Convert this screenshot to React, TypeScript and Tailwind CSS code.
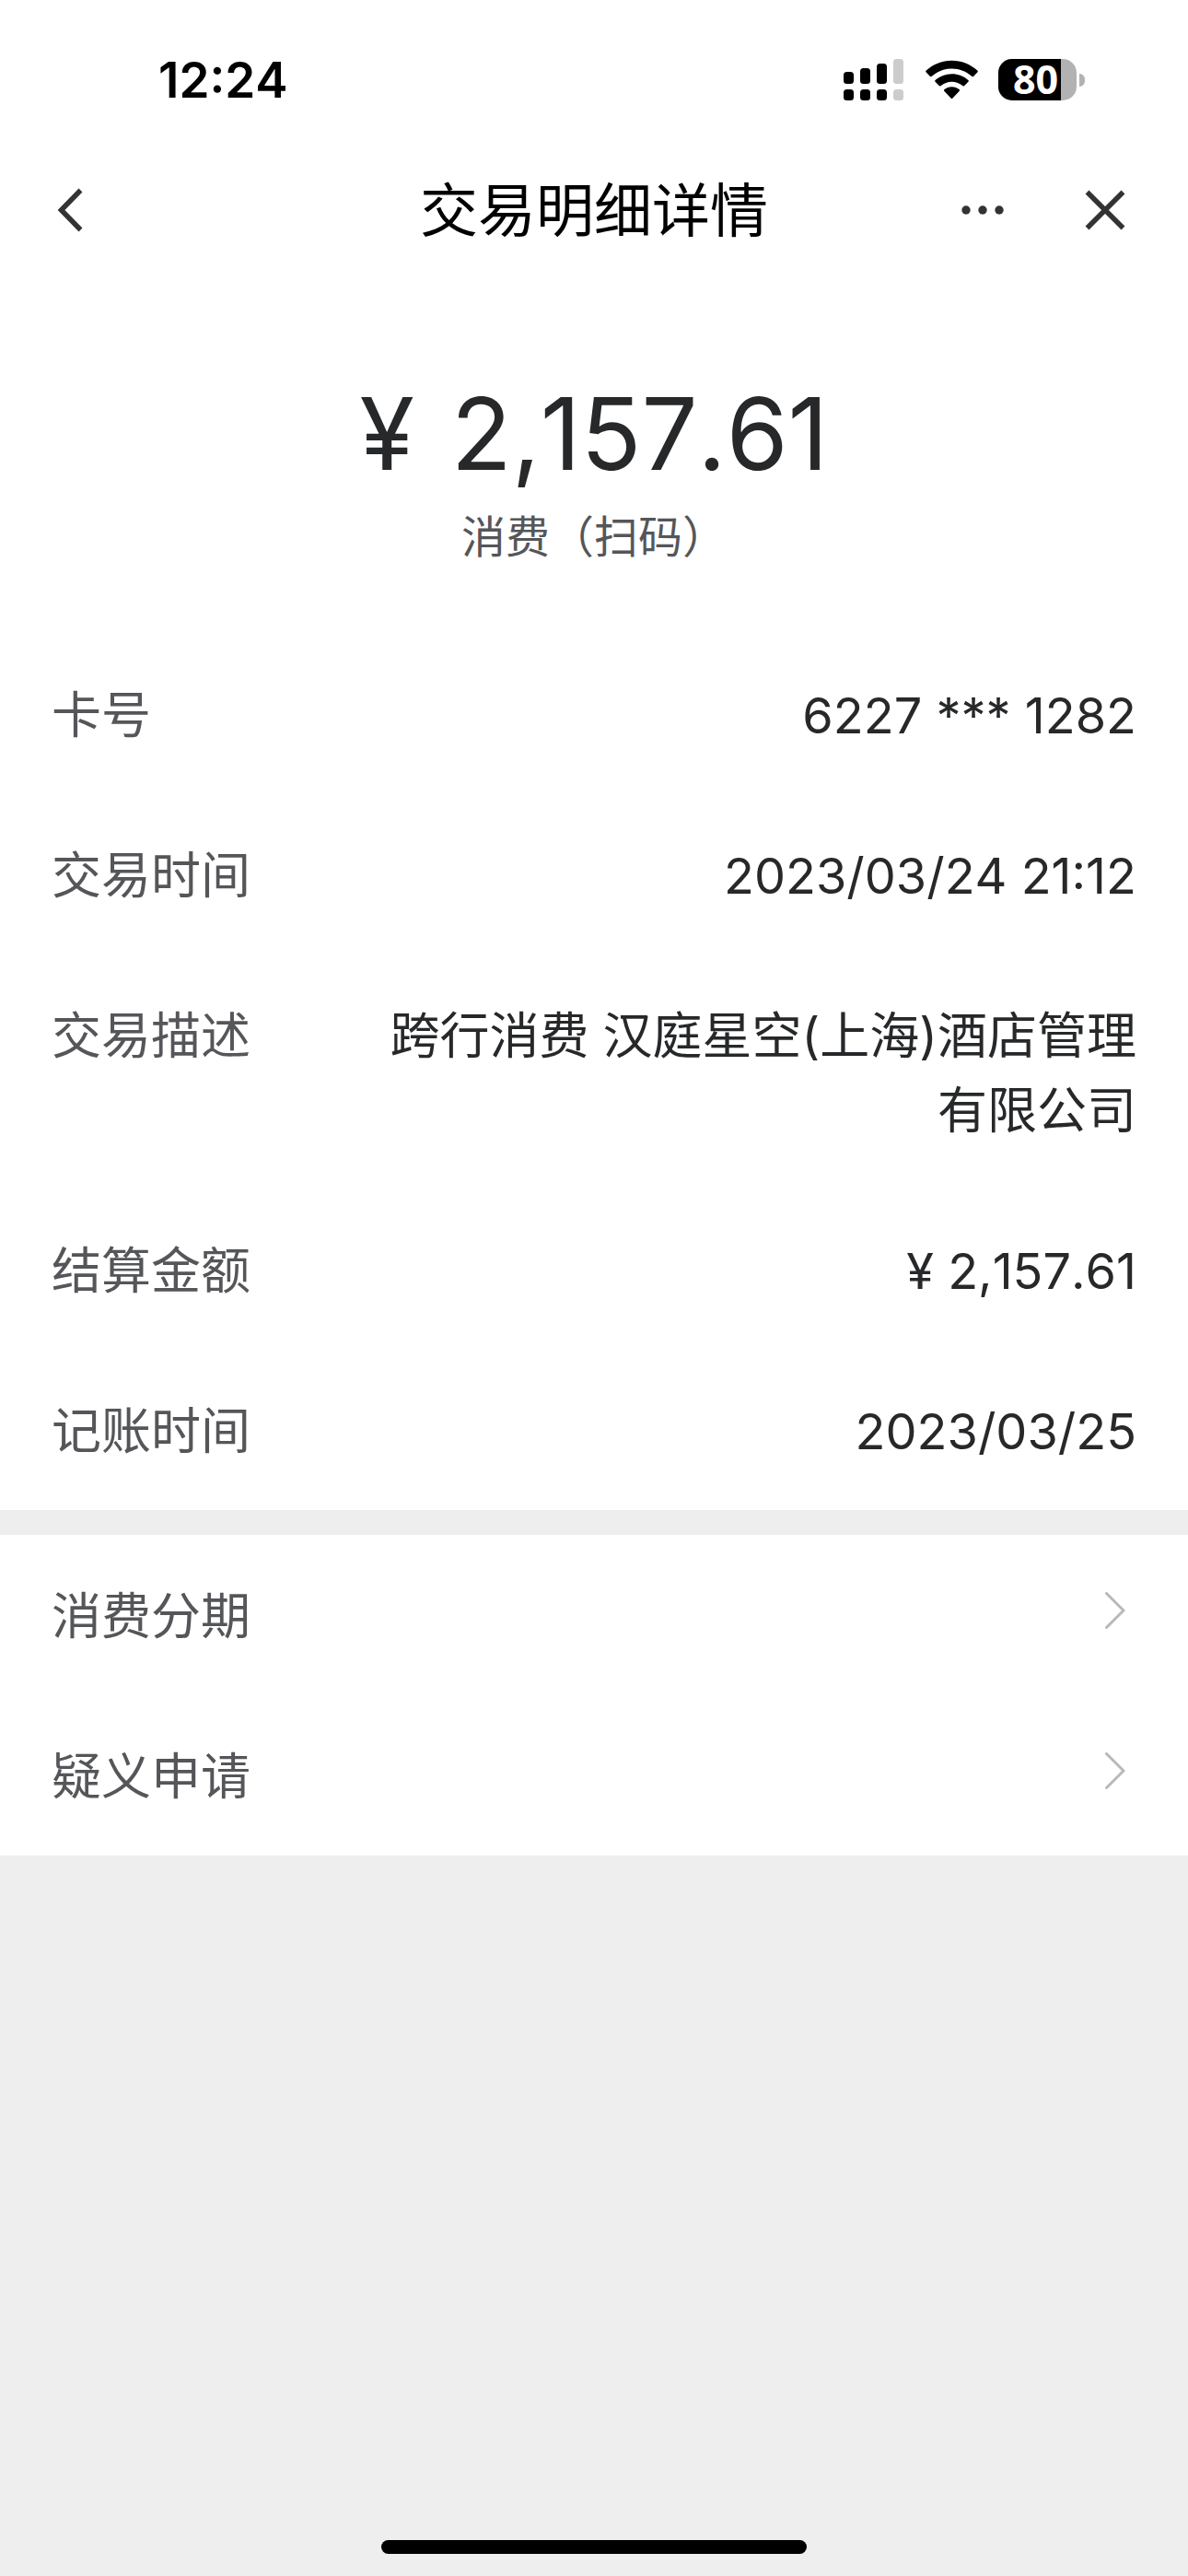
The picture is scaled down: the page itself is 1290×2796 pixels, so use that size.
import type { ReactNode } from "react";

interface DetailItem {
  label: string;
  value: string;
}

const details: DetailItem[] = [
  { label: "卡号", value: "6227 *** 1282" },
  { label: "交易时间", value: "2023/03/24 21:12" },
  { label: "交易描述", value: "跨行消费 汉庭星空(上海)酒店管理有限公司" },
  { label: "结算金额", value: "¥ 2,157.61" },
  { label: "记账时间", value: "2023/03/25" },
];

const actions = ["消费分期", "疑义申请"];

function SignalIcon() {
  return (
    <svg width="65" height="45" viewBox="0 0 65 45" aria-hidden="true">
      <rect x="0" y="14" width="11" height="13" rx="3.5" />
      <rect x="18" y="10" width="11" height="17" rx="3.5" />
      <rect x="36" y="5" width="11" height="22" rx="3.5" />
      <rect x="54" y="0" width="11" height="27" rx="3.5" fill="#cccccc" />
      <rect x="0" y="33" width="11" height="12" rx="3.5" />
      <rect x="18" y="33" width="11" height="12" rx="3.5" />
      <rect x="36" y="33" width="11" height="12" rx="3.5" />
      <rect x="54" y="33" width="11" height="12" rx="3.5" fill="#cccccc" />
    </svg>
  );
}

function WifiIcon() {
  return (
    <svg width="57" height="43" viewBox="0 0 57 43" aria-hidden="true">
      <path d="M28.5 0.8C39 0.8 48.5 4.7 56.3 11.6Q57.3 12.6 56.3 13.6L52 17.9Q51.2 18.7 50.2 17.8C44.2 12.5 36.7 9.5 28.5 9.5S12.8 12.5 6.8 17.8Q5.8 18.7 5 17.9L0.7 13.6Q-0.3 12.6 0.7 11.6C8.5 4.7 18 0.8 28.5 0.8Z" />
      <path d="M28.5 15.2C35.4 15.2 41.5 17.6 46.4 21.9Q47.4 22.8 46.4 23.8L42 28.2Q41.2 28.9 40.2 28.1C37 25.3 33 23.7 28.5 23.7S20 25.3 16.8 28.1Q15.8 28.9 15 28.2L10.6 23.8Q9.6 22.8 10.6 21.9C15.5 17.6 21.6 15.2 28.5 15.2Z" />
      <path d="M28.5 29.3C31.5 29.3 34.4 30.4 36.6 32.1Q37.5 33 36.6 33.9L29.5 41.6Q28.5 42.6 27.5 41.6L20.4 33.9Q19.5 33 20.4 32.1C22.6 30.4 25.5 29.3 28.5 29.3Z" />
    </svg>
  );
}

function Battery({ level }: { level: number }) {
  return (
    <div className="flex items-center gap-[3px]">
      <div className="relative h-[45px] w-[85px] rounded-[15px] bg-[#b2b2b2]">
        <div className="h-full rounded-l-[15px] bg-black" style={{ width: `${level}%` }} />
        <span className="absolute inset-x-0 -top-2 pl-4 font-['Open_Sans','Noto_Sans',sans-serif] text-[43px] leading-[60px] font-bold text-white">
          {level}
        </span>
      </div>
      <div className="h-[14px] w-[6px] rounded-r-full bg-[#b2b2b2]" />
    </div>
  );
}

function StatusBar() {
  return (
    <div className="flex h-[173px] items-center justify-between pr-28 pl-[172px]">
      <span className="text-[53px] leading-[60px] font-semibold text-black">12:24</span>
      <div className="flex items-center gap-[22px]">
        <div className="flex items-center gap-6">
          <SignalIcon />
          <WifiIcon />
        </div>
        <Battery level={80} />
      </div>
    </div>
  );
}

function IconButton({ label, children }: { label: string; children: ReactNode }) {
  return (
    <button type="button" aria-label={label} className="flex h-16 w-16 items-center justify-center">
      {children}
    </button>
  );
}

function NavBar() {
  return (
    <header className="grid grid-cols-[1fr_auto_1fr] items-center px-11 pt-[7px] pb-[9px]">
      <IconButton label="返回">
        <svg width="28" height="48" viewBox="0 0 28 48" fill="none" stroke="#333333" strokeWidth="5.5">
          <path d="M25.5 2.5L4.5 24L25.5 45.5" />
        </svg>
      </IconButton>
      <h1 className="text-[63px] leading-[96px] text-black">交易明细详情</h1>
      <div className="flex items-center justify-end gap-[69px] pr-[14px]">
        <IconButton label="更多">
          <svg width="48" height="12" viewBox="0 0 48 12" fill="#333333">
            <circle cx="6" cy="6" r="4.7" />
            <circle cx="24" cy="6" r="4.7" />
            <circle cx="42" cy="6" r="4.7" />
          </svg>
        </IconButton>
        <IconButton label="关闭">
          <svg width="44" height="44" viewBox="0 0 44 44" fill="none" stroke="#333333" strokeWidth="5.5">
            <path d="M2.5 2.5L41.5 41.5M41.5 2.5L2.5 41.5" />
          </svg>
        </IconButton>
      </div>
    </header>
  );
}

function ActionRow({ label }: { label: string }) {
  return (
    <button type="button" className="flex w-full items-start justify-between px-14 pt-12 pb-[45px] text-left">
      <span className="text-[54px] leading-[81px] text-[#555659]">{label}</span>
      <svg
        className="mt-[14px] mr-3"
        width="22"
        height="40"
        viewBox="0 0 22 40"
        fill="none"
        stroke="#b8b8b8"
        strokeWidth="3"
        strokeLinecap="round"
        aria-hidden="true"
      >
        <path d="M1.5 1.5L20 20L1.5 38.5" />
      </svg>
    </button>
  );
}

export default function App() {
  return (
    <div className="flex min-h-screen flex-col bg-[#eeeeee] font-['Inter','Noto_Sans_CJK_SC',sans-serif] [font-kerning:none]">
      <div className="bg-white">
        <StatusBar />
        <NavBar />

        {/* Amount */}
        <section className="flex flex-col items-center pt-[114px] pb-[67px]">
          <p className="flex gap-10 text-[108px] leading-[144px] text-[#26282a]">
            <span>¥</span>
            <span>2,157.61</span>
          </p>
          <p className="pt-0.5 text-[48px] leading-[76px] text-[#555659]">消费（扫码）</p>
        </section>

        {/* Transaction details */}
        <dl className="text-[54px] leading-[81px]">
          {details.map((item) => (
            <div key={item.label} className="flex px-14 pt-12 pb-[45px]">
              <dt className="w-[30%] shrink-0 text-[#555659]">{item.label}</dt>
              <dd className="flex-1 text-right text-[#26282a]">{item.value}</dd>
            </div>
          ))}
        </dl>
      </div>

      {/* Actions */}
      <div className="mt-[27px] bg-white">
        {actions.map((label) => (
          <ActionRow key={label} label={label} />
        ))}
      </div>

      {/* Home indicator */}
      <div className="mt-auto flex justify-center pb-6">
        <div className="h-[15px] w-[462px] rounded-full bg-black" />
      </div>
    </div>
  );
}
